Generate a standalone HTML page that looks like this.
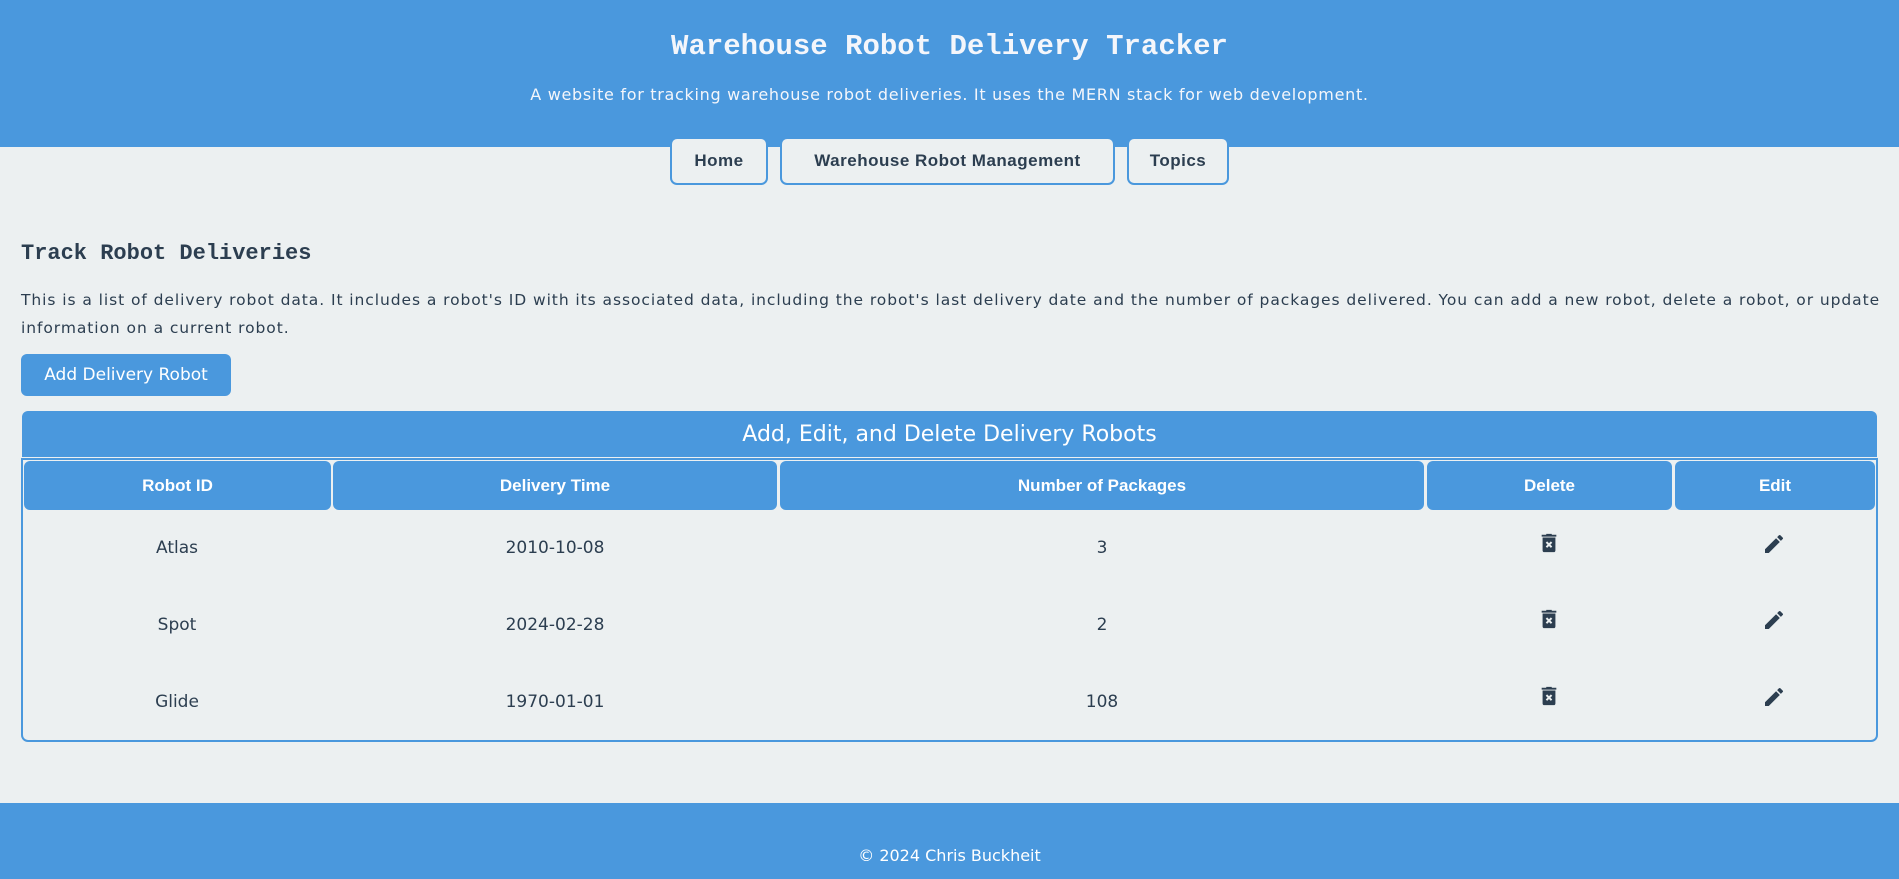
<!DOCTYPE html>
<html><head><meta charset="utf-8"><style>
*{box-sizing:border-box;margin:0;padding:0}
body{width:1899px;height:879px;background:#ecf0f1;color:#2c3e50;font-family:"DejaVu Sans","Liberation Sans",sans-serif;position:relative;overflow:hidden}
.hdr{position:absolute;left:0;top:0;width:1899px;height:147px;background:#4a98dd;text-align:center;color:#f4f6fb}
.hdr h1{position:absolute;top:30px;width:100%;font:bold 29px "Liberation Mono",monospace}
.hdr p{position:absolute;top:85px;width:100%;font-size:16px;letter-spacing:.7px}
.nav a{position:absolute;top:137px;height:48px;border:2px solid #4a98dd;border-radius:7px;background:#ecf0f1;font:bold 17px "Liberation Sans",sans-serif;color:#2c3e50;display:flex;align-items:center;justify-content:center;letter-spacing:.5px}
h2{position:absolute;left:21px;top:241px;font:bold 22px "Liberation Mono",monospace}
.para{position:absolute;left:21px;top:286px;font-size:15.5px;line-height:28px;letter-spacing:.93px;white-space:nowrap}
.btn{position:absolute;left:21px;top:354px;width:210px;height:42px;background:#4a98dd;color:#fff;border-radius:6px;font-size:17px;display:flex;align-items:center;justify-content:center}
.cap{position:absolute;left:22px;top:411px;width:1855px;height:46px;background:#4a98dd;color:#fff;border-radius:6px 6px 0 0;font-size:22px;display:flex;align-items:center;justify-content:center}
.tbl{position:absolute;left:21px;top:458px;width:1857px;height:284px;border:2px solid #4a98dd;border-radius:0 0 7px 7px}
.th{position:absolute;top:461px;height:49px;background:#4a98dd;color:#fff;border-radius:6px;font:bold 17px "Liberation Sans",sans-serif;display:flex;align-items:center;justify-content:center}
.td{position:absolute;font-size:17px;transform:translate(-50%,-50%)}
svg{position:absolute}
.ftr{position:absolute;left:0;top:803px;width:1899px;height:76px;background:#4a98dd;color:#fff;text-align:center;font-size:16px;padding-top:43px}
</style></head><body>
<div class="hdr"><h1>Warehouse Robot Delivery Tracker</h1><p>A website for tracking warehouse robot deliveries. It uses the MERN stack for web development.</p></div>
<div class="nav">
<a style="left:670px;width:98px">Home</a>
<a style="left:780px;width:335px">Warehouse Robot Management</a>
<a style="left:1127px;width:102px">Topics</a>
</div>
<h2>Track Robot Deliveries</h2>
<div class="para">This is a list of delivery robot data. It includes a robot's ID with its associated data, including the robot's last delivery date and the number of packages delivered. You can add a new robot, delete a robot, or update<br>information on a current robot.</div>
<div class="btn">Add Delivery Robot</div>
<div class="cap">Add, Edit, and Delete Delivery Robots</div>
<div class="tbl"></div>
<div class="th" style="left:24px;width:307px">Robot ID</div>
<div class="th" style="left:333px;width:444px">Delivery Time</div>
<div class="th" style="left:780px;width:644px">Number of Packages</div>
<div class="th" style="left:1427px;width:245px">Delete</div>
<div class="th" style="left:1675px;width:200px">Edit</div>

<div class="td" style="left:177px;top:548px">Atlas</div>
<div class="td" style="left:555px;top:548px">2010-10-08</div>
<div class="td" style="left:1102px;top:548px">3</div>
<div class="td" style="left:177px;top:625px">Spot</div>
<div class="td" style="left:555px;top:625px">2024-02-28</div>
<div class="td" style="left:1102px;top:625px">2</div>
<div class="td" style="left:177px;top:702px">Glide</div>
<div class="td" style="left:555px;top:702px">1970-01-01</div>
<div class="td" style="left:1102px;top:702px">108</div>

<svg width="0" height="0"><defs>
<symbol id="tr" viewBox="0 0 24 24"><path fill="#2c3e50" d="M4 3h16v2H4zM9 2h6v1H9zM5 6h14v14a2 2 0 0 1-2 2H7a2 2 0 0 1-2-2z"/><path stroke="#ecf0f1" stroke-width="2.2" d="M9.2 11l5.6 5.6M14.8 11l-5.6 5.6"/></symbol>
<symbol id="pn" viewBox="0 0 24 24"><path fill="#2c3e50" d="M3 17.25V21h3.75L17.81 9.94l-3.75-3.75zM20.710 7.04a1 1 0 0 0 0-1.41l-2.34-2.34a1 1 0 0 0-1.41 0l-1.83 1.83 3.75 3.75z"/></symbol>
</defs></svg>
<svg style="left:1538px;top:532px" width="22" height="22"><use href="#tr"/></svg>
<svg style="left:1762px;top:532px" width="24" height="24"><use href="#pn"/></svg>
<svg style="left:1538px;top:608px" width="22" height="22"><use href="#tr"/></svg>
<svg style="left:1762px;top:608px" width="24" height="24"><use href="#pn"/></svg>
<svg style="left:1538px;top:685px" width="22" height="22"><use href="#tr"/></svg>
<svg style="left:1762px;top:685px" width="24" height="24"><use href="#pn"/></svg>

<div class="ftr">© 2024 Chris Buckheit</div>
</body></html>
